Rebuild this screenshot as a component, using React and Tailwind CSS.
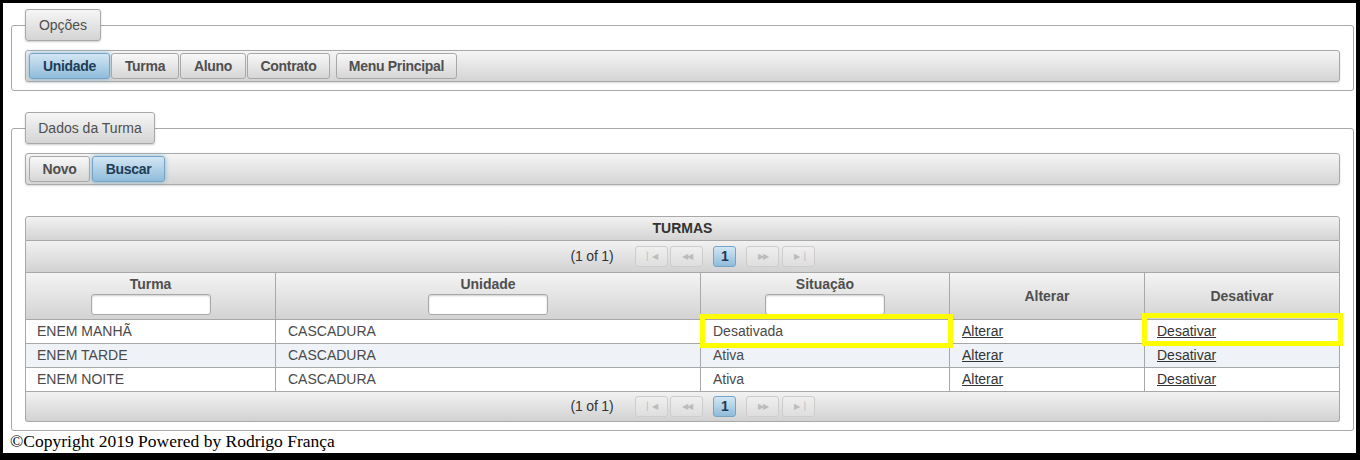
import React from "react";

const btnBase =
  "h-[26px] border rounded-[3px] text-[14px] tracking-[-0.3px] font-bold leading-none flex items-center justify-center whitespace-nowrap";
const btnNormal =
  btnBase +
  " border-[#a8a8a8] bg-linear-to-b from-[#f8f8f8] to-[#d6d6d6] text-[#4f4f4f]";
const btnActive =
  btnBase +
  " border-[#74a5c9] bg-linear-to-b from-[#d3e6f3] to-[#8fbcda] text-[#1f3c57] shadow-[0_0_5px_#85b2cb]";

function Legend({ children, w }) {
  return (
    <legend
      className={
        "h-[32px] border border-[#a8a8a8] rounded-[3px] bg-linear-to-b from-[#f6f6f6] to-[#d4d4d4] text-[14px] text-[#4f4f4f] flex items-center justify-center whitespace-nowrap shadow-[0_1px_2px_rgba(0,0,0,0.2)] " +
        w
      }
    >
      {children}
    </legend>
  );
}

function Toolbar({ children }) {
  return (
    <div className="h-[32px] border border-[#a8a8a8] rounded-[3px] bg-linear-to-b from-[#f5f5f5] to-[#d5d5d5] flex items-center pl-[3px] shadow-[0_1px_2px_rgba(0,0,0,0.15)]">
      {children}
    </div>
  );
}

function PagBtn({ children, active }) {
  if (active) {
    return (
      <div className="w-[23px] h-[21px] border border-[#74a5c9] rounded-[3px] bg-linear-to-b from-[#d3e6f3] to-[#8fbcda] text-[#1f3c57] text-[14px] font-bold flex items-center justify-center">
        {children}
      </div>
    );
  }
  return (
    <div className="w-[33px] h-[21px] border border-[#cdcdcd] rounded-[3px] bg-linear-to-b from-[#efefef] to-[#dedede] text-[#bcbcbc] text-[8px] flex items-center justify-center tracking-[-1px]">
      {children}
    </div>
  );
}

function Paginator({ h, top }) {
  return (
    <div
      className={
        "flex items-center justify-center border-x border-b border-[#a8a8a8] bg-linear-to-b from-[#f2f2f2] to-[#d2d2d2] " +
        h +
        (top ? "" : " rounded-b-[3px]")
      }
    >
      <div className="flex items-center ml-[21px]">
        <span className="text-[14px] text-[#333] mr-[22px] tracking-[-0.2px]">(1 of 1)</span>
        <div className="flex gap-[2px]">
          <PagBtn>▏◀</PagBtn>
          <PagBtn>◀◀</PagBtn>
        </div>
        <div className="mx-[10px]">
          <PagBtn active>1</PagBtn>
        </div>
        <div className="flex gap-[3px]">
          <PagBtn>▶▶</PagBtn>
          <PagBtn>▶▕</PagBtn>
        </div>
      </div>
    </div>
  );
}

const rows = [
  ["ENEM MANHÃ", "CASCADURA", "Desativada", "bg-white"],
  ["ENEM TARDE", "CASCADURA", "Ativa", "bg-[#eff3f8]"],
  ["ENEM NOITE", "CASCADURA", "Ativa", "bg-white"],
];

const cols = ["w-[249px]", "w-[425px]", "w-[249px]", "w-[195px]", "flex-1"];

function FilterInput() {
  return (
    <div className="w-[120px] h-[21px] bg-white border border-[#a8a8a8] rounded-[3px] shadow-[inset_0_1px_2px_rgba(0,0,0,0.2)] mt-[1px]" />
  );
}

export default function App() {
  return (
    <div
      className="w-[1360px] h-[460px] bg-black pt-[3px] pl-[3px] pr-[4px] pb-[7px]"
      style={{ fontFamily: '"Liberation Sans", Arial, sans-serif' }}
    >
      <div className="w-full h-full bg-white pt-[6px] pl-[8px] pr-[2px] relative">
        <fieldset className="border border-[#a8a8a8] rounded-[3px] px-[13px] pb-[8px]">
          <Legend w="w-[76px]">Opções</Legend>
          <div className="mt-[9px]">
            <Toolbar>
              <div className="flex gap-[1px]">
                <button className={btnActive + " w-[81px]"}>Unidade</button>
                <button className={btnNormal + " w-[68px]"}>Turma</button>
                <button className={btnNormal + " w-[66px]"}>Aluno</button>
                <button className={btnNormal + " w-[83px]"}>Contrato</button>
              </div>
              <button className={btnNormal + " w-[121px] ml-[6px]"}>Menu Principal</button>
            </Toolbar>
          </div>
        </fieldset>

        <fieldset className="border border-[#a8a8a8] rounded-[3px] px-[13px] pb-[8px] mt-[21px]">
          <Legend w="w-[130px]">Dados da Turma</Legend>
          <div className="mt-[9px]">
            <Toolbar>
              <div className="flex gap-[2px]">
                <button className={btnNormal + " w-[61px]"}>Novo</button>
                <button className={btnActive + " w-[73px]"}>Buscar</button>
              </div>
            </Toolbar>
          </div>

          <div className="mt-[31px] relative">
            <div className="h-[25px] border border-[#a8a8a8] rounded-t-[3px] bg-linear-to-b from-[#f2f2f2] to-[#d4d4d4] flex items-center justify-center text-[14px] font-bold text-[#333]">
              TURMAS
            </div>
            <Paginator h="h-[32px]" top />
            <div className="flex h-[47px] border-x border-b border-[#a8a8a8] bg-linear-to-b from-[#f4f4f4] to-[#d3d3d3] text-[14px] font-bold text-[#4f4f4f]">
              {["Turma", "Unidade", "Situação", "Alterar", "Desativar"].map((t, i) => (
                <div
                  key={t}
                  className={
                    cols[i] +
                    " flex flex-col items-center " +
                    (i < 3 ? "pt-[3px]" : "justify-center") +
                    (i > 0 ? " border-l border-[#a8a8a8]" : "")
                  }
                >
                  <span className="leading-[17px]">{t}</span>
                  {i < 3 && <FilterInput />}
                </div>
              ))}
            </div>
            {rows.map((r) => (
              <div
                key={r[0]}
                className={"flex h-[24px] border-x border-b border-[#a8a8a8] text-[14px] text-[#4a4a4a] " + r[3]}
              >
                <div className={cols[0] + " pl-[11px] flex items-center"}>{r[0]}</div>
                <div className={cols[1] + " pl-[12px] flex items-center border-l border-[#a8a8a8]"}>{r[1]}</div>
                <div className={cols[2] + " pl-[12px] flex items-center border-l border-[#a8a8a8]"}>{r[2]}</div>
                <div className={cols[3] + " pl-[12px] flex items-center border-l border-[#a8a8a8]"}>
                  <span className="underline text-[#333]">Alterar</span>
                </div>
                <div className={cols[4] + " pl-[12px] flex items-center border-l border-[#a8a8a8]"}>
                  <span className="underline text-[#333]">Desativar</span>
                </div>
              </div>
            ))}
            <Paginator h="h-[30px]" />

            <div className="absolute left-[675px] top-[98px] w-[253px] h-[34px] border-[5px] border-[#ffff00]" />
            <div className="absolute left-[1117px] top-[97px] w-[201px] h-[33px] border-[5px] border-[#ffff00]" />
          </div>
        </fieldset>

        <div
          className="text-[17.5px] text-black leading-[19px] mt-[1px] -ml-[1px] whitespace-nowrap"
          style={{ fontFamily: '"Liberation Serif", "Times New Roman", serif' }}
        >
          ©Copyright 2019 Powered by Rodrigo França
        </div>
      </div>
    </div>
  );
}
